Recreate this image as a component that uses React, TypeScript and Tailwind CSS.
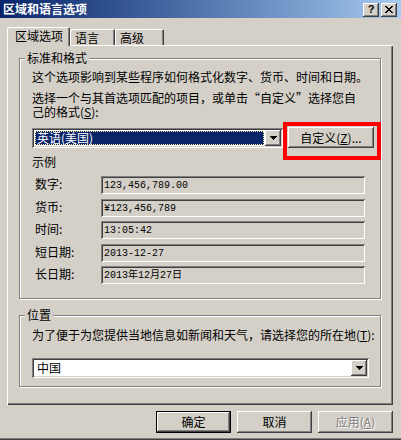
import React from 'react';

const RAISED = 'shadow-[inset_-1px_-1px_0_#404040,inset_1px_1px_0_#ffffff,inset_-2px_-2px_0_#808080]';
const SUNKEN = 'shadow-[inset_1px_1px_0_#808080,inset_-1px_-1px_0_#ffffff,inset_2px_2px_0_#404040,inset_-2px_-2px_0_#d4d0c8]';
const MONO = "font-['Liberation_Mono','Noto_Sans_CJK_SC',monospace]";

const DropArrow = () => (
  <div className={`w-[16px] h-[16px] shrink-0 bg-[#d4d0c8] ${RAISED} flex items-center justify-center`}>
    <svg width="7" height="4" viewBox="0 0 7 4" shapeRendering="crispEdges">
      <path d="M0 0H7V1H6V2H5V3H4V4H3V3H2V2H1V1H0Z" fill="#000" />
    </svg>
  </div>
);

interface GroupBoxProps {
  title: string;
  className?: string;
  children?: React.ReactNode;
}

const GroupBox: React.FC<GroupBoxProps> = ({ title, className, children }) => (
  <div className={`relative w-[362px] border border-[#808080] shadow-[1px_1px_0_#ffffff,inset_1px_1px_0_#ffffff] ${className}`}>
    <span className="absolute -top-[8px] left-[5px] bg-[#d4d0c8] px-[2px] leading-[14px]">{title}</span>
    {children}
  </div>
);

const SampleRow = ({ label, value }: { label: string; value: string }) => (
  <div className="flex items-center h-[18px]">
    <span className="w-[69px] pl-[3px] leading-[14px] -mt-[2px]">{label}</span>
    <div className={`w-[264px] h-[18px] ${SUNKEN} flex items-center pl-[3px] pt-[1px] text-[10px] ${MONO}`}>
      {value}
    </div>
  </div>
);

const TabButton = ({ label, active, width }: { label: string; active?: boolean; width: string }) => (
  <div
    className={
      active
        ? `relative z-10 ${width} h-[19px] -mb-[1px] bg-[#d4d0c8] rounded-t-[2px] shadow-[inset_1px_1px_0_#ffffff,inset_-1px_0_0_#404040,inset_-2px_0_0_#808080] pl-[8px] pt-[2px] leading-[14px]`
        : `${width} h-[16px] bg-[#d4d0c8] rounded-t-[2px] shadow-[inset_1px_1px_0_#ffffff,inset_-1px_0_0_#404040,inset_-2px_0_0_#808080] pl-[5px] pt-[2px] leading-[14px]`
    }
  >
    {label}
  </div>
);

const PushButton = ({ label, isDefault, disabled }: { label: React.ReactNode; isDefault?: boolean; disabled?: boolean }) => (
  <div className={`w-[75px] h-[22px] ${isDefault ? 'border border-black' : ''}`}>
    <div
      className={`w-full h-full bg-[#d4d0c8] ${RAISED} flex items-center justify-center leading-[14px] ${
        disabled ? 'text-[#808080] [text-shadow:1px_1px_0_#ffffff]' : ''
      }`}
    >
      {label}
    </div>
  </div>
);

export default function App() {
  return (
    <div className="w-[401px] h-[440px] bg-[#d4d0c8] flex flex-col text-[12px] text-black font-['Noto_Sans_CJK_SC','Liberation_Sans',sans-serif] shadow-[inset_0_-1px_0_#404040,inset_0_-2px_0_#808080]">
      {/* title bar */}
      <div className="h-[18px] shrink-0 flex items-center bg-gradient-to-r from-[#0a246a] to-[#a6caf0] pl-[3px] pr-[4px]">
        <span className="text-white font-bold leading-[14px] flex-1">区域和语言选项</span>
        <div className="flex gap-[2px] mt-[1px]">
          <div className={`w-[16px] h-[14px] bg-[#d4d0c8] ${RAISED} flex items-center justify-center font-bold text-[11px] leading-none font-['Liberation_Sans',sans-serif]`}>
            ?
          </div>
          <div className={`w-[16px] h-[14px] bg-[#d4d0c8] ${RAISED} flex items-center justify-center`}>
            <svg width="8" height="7" viewBox="0 0 8 7" shapeRendering="crispEdges">
              <path d="M0 0H2V1H3V2H5V1H6V0H8V1H7V2H6V3H5V4H6V5H7V6H8V7H6V6H5V5H3V6H2V7H0V6H1V5H2V4H3V3H2V2H1V1H0Z" fill="#000" />
            </svg>
          </div>
        </div>
      </div>

      {/* tabs */}
      <div className="flex items-end px-[7px] pt-[9px]">
        <TabButton label="区域选项" active width="w-[63px]" />
        <TabButton label="语言" width="w-[45px]" />
        <TabButton label="高级" width="w-[49px]" />
      </div>

      {/* tab panel */}
      <div className="ml-[7px] w-[386px] h-[360px] shadow-[inset_1px_1px_0_#ffffff,inset_-1px_-1px_0_#404040,inset_-2px_-2px_0_#808080] pl-[12px] pt-[13px]">
        <GroupBox title="标准和格式" className="h-[241px] pl-[12px] pt-[11px]">
          <div className="leading-[14px]">这个选项影响到某些程序如何格式化数字、货币、时间和日期。</div>
          <div className="leading-[14px] mt-[7px] whitespace-nowrap">选择一个与其首选项匹配的项目，或单击“自定义”选择您自</div>
          <div className="leading-[14px] whitespace-nowrap">己的格式(<u>S</u>):</div>
          <div className="flex items-start mt-[8px] gap-[5px]">
            <div className={`mt-[1px] w-[251px] h-[20px] ${SUNKEN} bg-white p-[2px] flex items-center`}>
              <div className="flex-1 h-[16px] p-[1px]">
                <div className="h-full bg-[#0a246a] outline-1 outline-dotted outline-[#ffef9f] -outline-offset-1 text-white leading-[14px] pl-[2px]">
                  英语(美国)
                </div>
              </div>
              <DropArrow />
            </div>
            <div className="relative">
              <div className={`w-[86px] h-[21px] bg-[#d4d0c8] ${RAISED} flex items-center justify-center leading-[14px]`}>
                自定义(<u>Z</u>)...
              </div>
              <div className="absolute -left-[5px] -top-[5px] w-[98px] h-[38px] border-[4px] border-[#ff0000]" />
            </div>
          </div>
          <div className="leading-[14px] mt-[7px]">示例</div>
          <div className="flex flex-col gap-[4.5px] mt-[7px]">
            <SampleRow label="数字:" value="123,456,789.00" />
            <SampleRow label="货币:" value="¥123,456,789" />
            <SampleRow label="时间:" value="13:05:42" />
            <SampleRow label="短日期:" value="2013-12-27" />
            <SampleRow label="长日期:" value="2013年12月27日" />
          </div>
        </GroupBox>

        <GroupBox title="位置" className="h-[72px] mt-[16px] pl-[12px] pt-[12px]">
          <div className="leading-[14px] whitespace-nowrap">为了便于为您提供当地信息如新闻和天气，请选择您的所在地(<u>T</u>):</div>
          <div className={`mt-[16px] w-[337px] h-[20px] ${SUNKEN} bg-white p-[2px] flex items-center`}>
            <div className="flex-1 leading-[14px] pl-[3px]">中国</div>
            <DropArrow />
          </div>
        </GroupBox>
      </div>

      {/* buttons */}
      <div className="flex justify-end gap-[6px] pr-[8px] mt-[6px]">
        <PushButton label="确定" isDefault />
        <PushButton label="取消" />
        <PushButton label={<>应用(<u>A</u>)</>} disabled />
      </div>
    </div>
  );
}
